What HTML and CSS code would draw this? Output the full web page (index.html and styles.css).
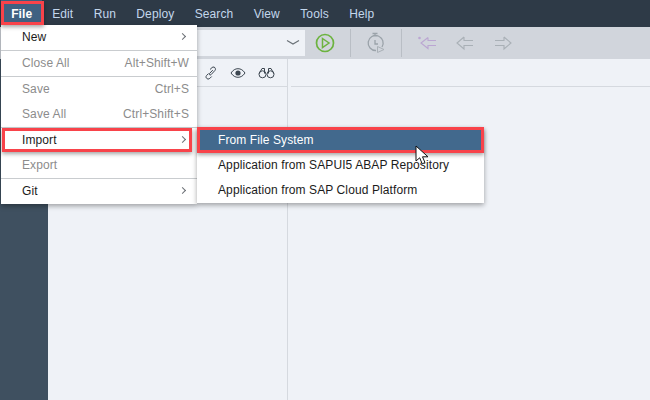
FILE: index.html
```html
<!DOCTYPE html>
<html lang="en">

<head>
    <meta charset="UTF-8">
    <title>SAP Web IDE</title>
    <link rel="stylesheet" href="styles.css">
</head>

<body>
    <div class="menubar">
        <div class="menu-title active">File</div>
        <div class="menu-title">Edit</div>
        <div class="menu-title">Run</div>
        <div class="menu-title">Deploy</div>
        <div class="menu-title">Search</div>
        <div class="menu-title">View</div>
        <div class="menu-title">Tools</div>
        <div class="menu-title">Help</div>
    </div>

    <div class="toolbar">
        <div class="select">
            <svg width="14" height="8" viewBox="0 0 14 8"><path d="M1 1.500 7 5l6-3.500" fill="none" stroke="#6b7278" stroke-width="1.200"/></svg>
        </div>
        <div class="tool run-btn">
            <svg width="24" height="24" viewBox="0 0 24 24">
                <circle cx="12" cy="12" r="8.500" fill="none" stroke="#6cb33f" stroke-width="1.700"/>
                <path d="M9.500 7.500 16 12l-6.500 4.500z" fill="none" stroke="#6cb33f" stroke-width="1.500"/>
            </svg>
        </div>
        <div class="sep"></div>
        <div class="tool timer-btn">
            <svg width="24" height="24" viewBox="0 0 24 24">
                <path d="M19 16A7.500 7.500 0 1 0 13 19.500M9.500 2.500h5M12 3v2.500M17.500 6.500l1.500 1.500" fill="none" stroke="#9aa2a9" stroke-width="1.300"/>
                <path d="M12 9v4h3" fill="none" stroke="#9aa2a9" stroke-width="1.300"/>
                <path d="M14.500 15.500 21 18.500l-6.500 3z" fill="none" stroke="#a9b0b6" stroke-width="1"/>
            </svg>
        </div>
        <div class="sep"></div>
        <div class="nav-icons">
            <svg width="20" height="16" viewBox="0 0 20 16">
                <circle cx="2.500" cy="3" r="1.300" fill="#bba6d2"/>
                <path d="M11 2.500 4 8l7 5.500V10.500h8M11 2.500V5.500h8" fill="none" stroke="#bba6d2" stroke-width="1.100"/>
            </svg>
            <svg width="20" height="16" viewBox="0 0 20 16">
                <path d="M9 2 2 8l7 6v-3.500h9M9 2v3.500h9" fill="none" stroke="#a9b0b6" stroke-width="1.100"/>
            </svg>
            <svg width="20" height="16" viewBox="0 0 20 16">
                <path d="M11 2l7 6-7 6v-3.500H2M11 2v3.500H2" fill="none" stroke="#a9b0b6" stroke-width="1.100"/>
            </svg>
        </div>
    </div>

    <div class="workspace">
        <div class="sidebar"></div>
        <div class="panel">
            <div class="panel-tools">
                <svg width="14" height="14" viewBox="0 0 14 14">
                    <path d="M6 3.500 8 1.600a2 2 0 0 1 3.400 1.100c.2.800 0 1.300-.5 1.800L7 8.700c-1 .9-2.300-.3-1.400-1.300l3.200-3.300M7.700 10.500 5.800 12.400a2.300 2.300 0 0 1-3.400-.3c-.6-.8-.5-1.800.1-2.500l2-2.100" fill="none" stroke="#3c4650" stroke-width="1"/>
                </svg>
                <svg width="16" height="12" viewBox="0 0 16 12">
                    <path d="M1 6c2-3 4.300-4.300 7-4.300S13 3 15 6c-2 3-4.300 4.300-7 4.300S3 9 1 6z" fill="none" stroke="#3c4650" stroke-width="1"/>
                    <circle cx="8" cy="6" r="2.600" fill="#3c4650"/>
                </svg>
                <svg width="17" height="12" viewBox="0 0 17 12">
                    <circle cx="4.500" cy="7.300" r="3.500" fill="none" stroke="#3c4650" stroke-width="1"/>
                    <circle cx="12.500" cy="7.300" r="3.500" fill="none" stroke="#3c4650" stroke-width="1"/>
                    <path d="M1.200 6.500 4 1.500h2.500v5M15.800 6.500 13 1.500h-2.500v5" fill="none" stroke="#3c4650" stroke-width="1"/>
                </svg>
            </div>
        </div>
        <div class="editor">
            <div class="editor-head"></div>
        </div>
    </div>

    <div class="menu file-menu">
        <div class="item group-end"><span>New</span><span class="arrow"></span></div>
        <div class="item off group-end"><span>Close All</span><span>Alt+Shift+W</span></div>
        <div class="item off"><span>Save</span><span>Ctrl+S</span></div>
        <div class="item off group-end"><span>Save All</span><span>Ctrl+Shift+S</span></div>
        <div class="item"><span>Import</span><span class="arrow"></span></div>
        <div class="item off group-end"><span>Export</span></div>
        <div class="item"><span>Git</span><span class="arrow"></span></div>
    </div>

    <div class="menu sub-menu">
        <div class="item selected"><span>From File System</span></div>
        <div class="item"><span>Application from SAPUI5 ABAP Repository</span></div>
        <div class="item"><span>Application from SAP Cloud Platform</span></div>
    </div>

    <!-- red marks from the screenshot -->
    <div class="mark mark-file"></div>
    <div class="mark mark-import"></div>
    <div class="mark mark-system"></div>

    <svg class="cursor" width="16" height="22" viewBox="0 0 16 22">
        <path d="M1 1v15l3.700-3.200 2.500 6 2.800-1.200-2.500-5.800H13z" fill="#fff" stroke="#111" stroke-width="1"/>
    </svg>
</body>

</html>
```

FILE: styles.css
```css
* {
    box-sizing: border-box;
}

body {
    margin: 0;
    width: 650px;
    height: 400px;
    overflow: hidden;
    position: relative;
    background: #eff2f7;
    font-family: "Liberation Sans", Arial, sans-serif;
    font-size: 12px;
    letter-spacing: 0.100px;
}

.menubar {
    display: flex;
    height: 27px;
    background: #2e3a47;
    padding-left: 1px;
}

.menu-title {
    padding: 7px 10.200px 0;
    color: #c3d7ec;
    font-size: 12px;
}

.menu-title.active {
    width: 41px;
    background: #3f6182;
    color: #fff;
    font-weight: bold;
}

.toolbar {
    display: flex;
    align-items: center;
    height: 32px;
    padding-left: 48px;
    background: #d1d5dc;
}

.select {
    display: flex;
    align-items: center;
    justify-content: flex-end;
    width: 257px;
    height: 26px;
    padding-right: 5px;
    background: #eff2f7;
}

.tool {
    display: flex;
    align-items: center;
    justify-content: center;
}

.run-btn {
    width: 24px;
    margin-left: 8px;
}

.sep {
    width: 1px;
    height: 28px;
    background: #b9bec5;
}

.run-btn + .sep {
    margin-left: 13px;
}

.timer-btn {
    width: 24px;
    margin-left: 12px;
    margin-right: 14px;
}

.nav-icons {
    display: flex;
    gap: 18px;
    margin-left: 15px;
}

.workspace {
    display: flex;
    height: 341px;
}

.sidebar {
    width: 48px;
    background: #3f5060;
}

.panel {
    width: 240px;
    border-right: 1px solid #d5d9df;
}

.panel-tools {
    display: flex;
    align-items: center;
    gap: 12px;
    height: 28px;
    padding-left: 156px;
    border-bottom: 1px solid #d5d9df;
}

.editor {
    flex: 1;
    padding-left: 3px;
}

.editor-head {
    height: 28px;
    border-bottom: 1px solid #d5d9df;
}

.menu {
    position: absolute;
    background: #fff;
    box-shadow: 0 2px 5px rgba(0, 0, 0, 0.35);
}

.file-menu {
    left: 1px;
    top: 25px;
    width: 196px;
}

.sub-menu {
    left: 197px;
    top: 128px;
    width: 287px;
}

.item {
    display: flex;
    justify-content: space-between;
    align-items: center;
    height: 25px;
    padding: 0 8px 2px 21px;
    color: #1b1b1b;
}

.group-end {
    height: 26px;
    border-bottom: 1px solid #c9cccf;
}

.item.off {
    color: #8c8c8c;
}

.arrow {
    width: 5px;
    height: 5px;
    margin-right: 4px;
    border-top: 1px solid #6a6f75;
    border-right: 1px solid #6a6f75;
    transform: rotate(45deg);
}

.item.selected {
    background: #42698d;
    color: #fff;
}

.mark {
    position: absolute;
    border: 3px solid #f8434a;
    box-shadow: 0 2px 4px rgba(0, 0, 0, 0.35);
}

.mark-file {
    left: 1px;
    top: 1px;
    width: 43px;
    height: 24px;
}

.mark-import {
    left: 2px;
    top: 128px;
    width: 190px;
    height: 24px;
}

.mark-system {
    left: 197px;
    top: 127px;
    width: 287px;
    height: 26px;
}

.cursor {
    position: absolute;
    left: 415px;
    top: 145px;
}
```
